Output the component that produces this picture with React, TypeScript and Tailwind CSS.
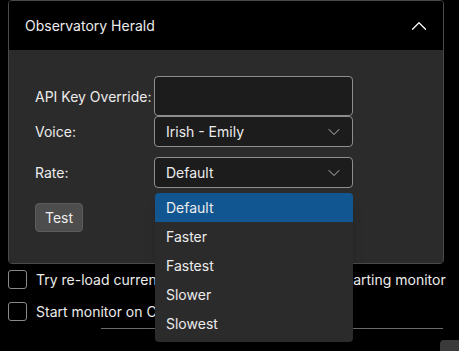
import { ChevronUp, ChevronDown } from "lucide-react";

const RATES = ["Default", "Faster", "Fastest", "Slower", "Slowest"];

function Select({ value }: { value: string }) {
  return (
    <div className="flex h-[31px] w-[199px] items-center justify-between rounded-[4px] border border-[#8e8e8e] bg-[#1c1c1c] pl-[11px] pr-[8px]">
      <span>{value}</span>
      <ChevronDown size={20} strokeWidth={1.1} className="text-[#c8c8c8]" />
    </div>
  );
}

function Checkbox({ label }: { label: string }) {
  return (
    <div className="flex h-[19px] items-center gap-[9px]">
      <div className="h-[19px] w-[19px] rounded-[3px] border border-[#8a8a8a]" />
      <span className="whitespace-nowrap">{label}</span>
    </div>
  );
}

export default function App() {
  return (
    <div
      className="relative h-[351px] w-[459px] overflow-hidden bg-black px-[8px] text-[14px] text-[#ececec]"
      style={{ fontFamily: "Inter, 'Noto Sans', sans-serif" }}
    >
      {/* Card */}
      <div className="w-[436px] overflow-hidden rounded-[4px] border border-[#4a4a4a]">
        <div className="flex h-[49px] items-center justify-between bg-black pl-[16px] pr-[11px]">
          <span>Observatory Herald</span>
          <ChevronUp size={26} strokeWidth={1.1} className="text-white" />
        </div>
        <div className="bg-[#2b2b2b] pb-[31px] pl-[26px] pt-[26px]">
          <div className="grid grid-cols-[119px_199px] items-center">
            <span className="whitespace-nowrap">API Key Override:</span>
            <div className="h-[40px] rounded-[4px] border border-[#8e8e8e] bg-[#1c1c1c]" />
            <span>Voice:</span>
            <Select value="Irish - Emily" />
            <span className="mt-[10px]">Rate:</span>
            <div className="mt-[10px]">
              <Select value="Default" />
            </div>
          </div>
          <button className="mt-[15px] h-[29px] rounded-[4px] border border-[#5c5c5c] bg-[#4d4d4d] px-[9px]">
            Test
          </button>
        </div>
      </div>

      {/* Options */}
      <div className="mt-[6px] flex flex-col gap-[13px]">
        <Checkbox label="Try re-load current target sequence file when starting monitor" />
        <Checkbox label="Start monitor on Connect" />
      </div>
      <div className="ml-[93px] mt-[7px] h-px w-[342px] bg-[#6a6a6a]" />
      <div className="absolute left-[440px] top-[340px] h-[24px] w-[40px] rounded-[4px] bg-[#3a3a3a]" />

      {/* Open dropdown */}
      <div className="absolute left-[155px] top-[193px] w-[198px] overflow-hidden rounded-[4px] bg-[#2b2b2b] pb-[4px] shadow-lg">
        {RATES.map((r, i) => (
          <div
            key={r}
            className={
              i === 0
                ? "flex h-[29px] items-center bg-[#125691] pl-[11px]"
                : "flex h-[29px] items-center pl-[11px]"
            }
          >
            {r}
          </div>
        ))}
      </div>
    </div>
  );
}
